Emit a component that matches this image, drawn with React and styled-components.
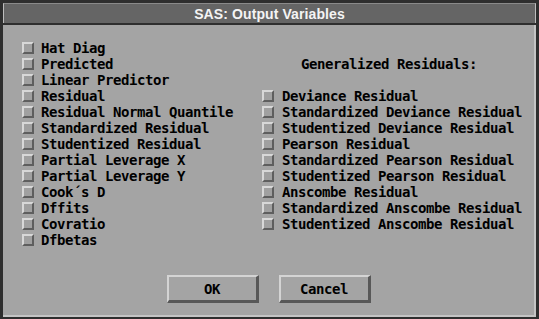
import React from "react";
import styled, { createGlobalStyle } from "styled-components";

const Global = createGlobalStyle`
  html, body { margin: 0; padding: 0; background: #2e2e2e; }
  #root { width: 539px; height: 319px; }
`;

const Window = styled.div`
  box-sizing: border-box;
  width: 539px;
  height: 319px;
  background: #2e2e2e;
  padding: 3px 3px 2px 3px;
  display: flex;
  flex-direction: column;
`;

const TitleBar = styled.div`
  box-sizing: border-box;
  height: 20px;
  background: #656565;
  border-left: 1px solid #bdbdbd;
  border-right: 1px solid #bdbdbd;
  border-top: 1px solid #8a8a8a;
  margin-bottom: 2px;
  display: flex;
  align-items: center;
  justify-content: center;
  color: #f4f4f4;
  font-family: "Liberation Sans", Arial, sans-serif;
  font-weight: bold;
  font-size: 14px;
  letter-spacing: 0.1px;
`;

const Body = styled.div`
  box-sizing: border-box;
  flex: 1;
  background: #a4a4a4;
  border-right: 2px solid #c4c4c4;
  border-bottom: 2px solid #c4c4c4;
  padding: 15px 0 0 19px;
  display: flex;
  flex-direction: column;
  font-family: "DejaVu Sans Mono", "Liberation Mono", monospace;
  font-weight: bold;
  font-size: 14px;
  letter-spacing: -0.43px;
  color: #000;
`;

const Columns = styled.div`
  display: grid;
  grid-template-columns: 240px 1fr;
`;

const Column = styled.div`
  display: flex;
  flex-direction: column;
`;

const Row = styled.div`
  height: 16px;
  display: flex;
  align-items: center;
  gap: ${(p) => (p.$wide ? 8 : 7)}px;
  white-space: pre;
`;

const Header = styled.div`
  height: 16px;
  display: flex;
  align-items: center;
  padding-left: 39px;
  white-space: pre;
`;

const Spacer = styled.div`
  height: 16px;
`;

const Box = styled.span`
  box-sizing: border-box;
  width: 12px;
  height: 12px;
  flex: none;
  background: #a0a0a0;
  border-top: 2px solid #d8d8d8;
  border-left: 2px solid #d8d8d8;
  border-bottom: 2px solid #5e5e5e;
  border-right: 2px solid #5e5e5e;
`;

const Buttons = styled.div`
  display: flex;
  justify-content: center;
  gap: 20px;
  margin-top: 27px;
  margin-left: -19px;
`;

const Button = styled.button`
  box-sizing: border-box;
  width: 92px;
  height: 28px;
  padding: 0;
  background: #a4a4a4;
  border-top: 2px solid #d4d4d4;
  border-left: 2px solid #d4d4d4;
  border-bottom: 3px solid #585858;
  border-right: 3px solid #585858;
  font: inherit;
  letter-spacing: inherit;
  color: #000;
  display: flex;
  align-items: center;
  justify-content: center;
`;

const left = [
  "Hat Diag",
  "Predicted",
  "Linear Predictor",
  "Residual",
  "Residual Normal Quantile",
  "Standardized Residual",
  "Studentized Residual",
  "Partial Leverage X",
  "Partial Leverage Y",
  "Cook´s D",
  "Dffits",
  "Covratio",
  "Dfbetas",
];

const right = [
  "Deviance Residual",
  "Standardized Deviance Residual",
  "Studentized Deviance Residual",
  "Pearson Residual",
  "Standardized Pearson Residual",
  "Studentized Pearson Residual",
  "Anscombe Residual",
  "Standardized Anscombe Residual",
  "Studentized Anscombe Residual",
];

export default function App() {
  return (
    <>
      <Global />
      <Window>
        <TitleBar>SAS: Output Variables</TitleBar>
        <Body>
          <Columns>
            <Column>
              {left.map((t) => (
                <Row key={t}>
                  <Box />
                  <span>{t}</span>
                </Row>
              ))}
            </Column>
            <Column>
              <Spacer />
              <Header>Generalized Residuals:</Header>
              <Spacer />
              {right.map((t) => (
                <Row key={t} $wide>
                  <Box />
                  <span>{t}</span>
                </Row>
              ))}
            </Column>
          </Columns>
          <Buttons>
            <Button>OK</Button>
            <Button>Cancel</Button>
          </Buttons>
        </Body>
      </Window>
    </>
  );
}
